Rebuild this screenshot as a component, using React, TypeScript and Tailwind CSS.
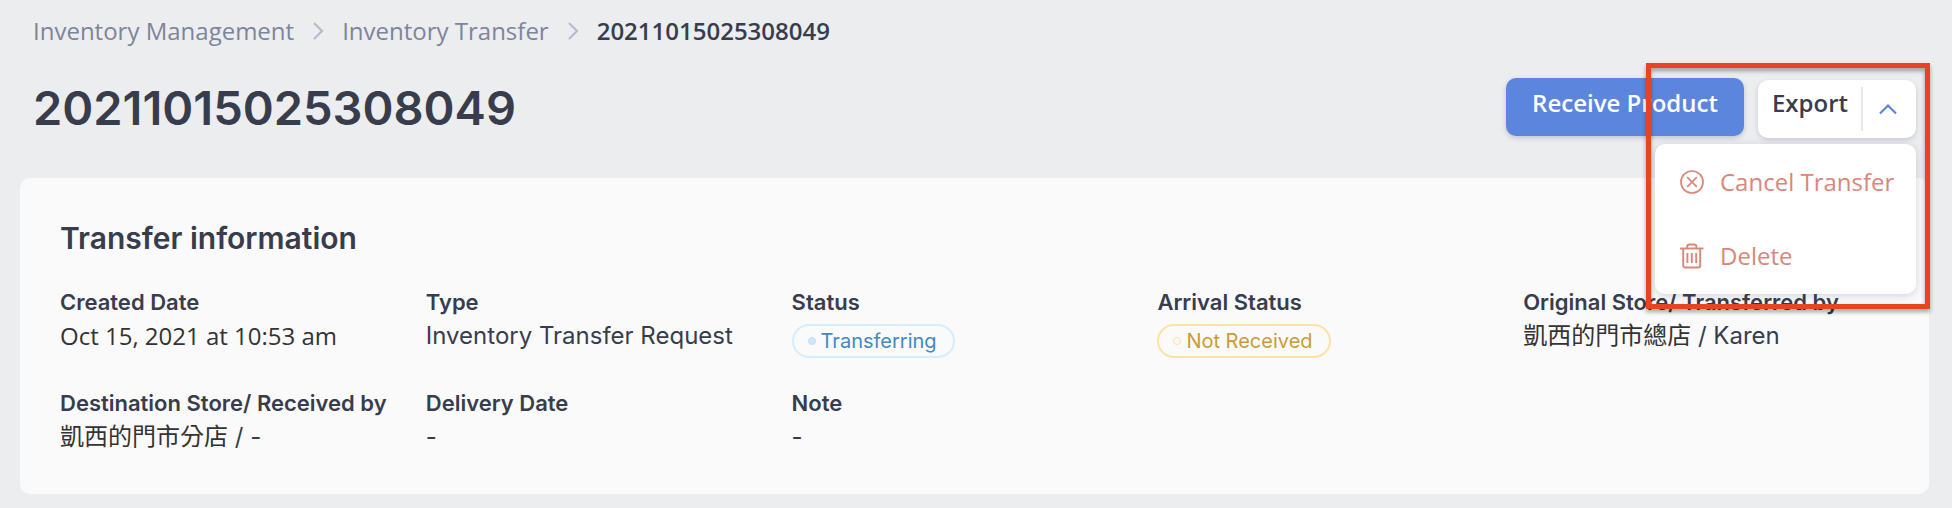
import { useState } from 'react'

type Tone = 'blue' | 'yellow'

const toneClass: Record<Tone, { badge: string; dot: string }> = {
  blue: {
    badge: 'border-[#d6ecff] text-[#4289c2]',
    dot: 'border-[#bfe0f8] bg-[#cfe6f8]',
  },
  yellow: {
    badge: 'border-[#ffe2a0] text-[#cc9a35]',
    dot: 'border-[#ffe2a0]',
  },
}

export default function App() {
  const [open, setOpen] = useState(true)

  return (
    <div className="min-h-screen bg-[#ecedef] pt-3 pb-3.5 pl-5 pr-[23px] text-[#383d4e] font-['Open_Sans','Noto_Sans_CJK_TC',sans-serif] text-2xl">
      {/* breadcrumb */}
      <nav aria-label="Breadcrumb" className="flex items-center gap-[18px] pl-[13px] leading-[38px] text-[#7d859b]">
        <a href="#inventory">Inventory Management</a>
        <Separator />
        <a href="#transfer">Inventory Transfer</a>
        <Separator />
        <span className="font-semibold text-[#383d4e]">20211015025308049</span>
      </nav>

      {/* title and actions */}
      <header className="mt-7 mb-10 flex items-start justify-between px-[13px]">
        <h1 className="font-['Inter',sans-serif] text-[47px] leading-[60px] font-semibold">20211015025308049</h1>
        <div className="flex items-start gap-3.5">
          <button className="h-[58px] rounded-[10px] bg-[#5c86de] px-[26px] pb-2 font-semibold text-white shadow-[0_2px_5px_rgba(60,70,110,0.25)]">
            Receive Product
          </button>
          <div className="relative mt-0.5">
            <div className="flex h-[58px] items-center rounded-[10px] bg-white shadow-[0_2px_5px_rgba(60,70,110,0.2)]">
              <button className="h-full pb-3 pl-3.5 pr-[13px] font-semibold">Export</button>
              <button
                aria-label="More actions"
                aria-expanded={open}
                onClick={() => setOpen(!open)}
                className="flex h-11 w-[55px] items-center justify-center border-l-2 border-[#e4e9ee] pr-1"
              >
                <svg width="18" height="12" viewBox="0 0 18 12" fill="none" stroke="#5c86de" strokeWidth="2.2">
                  <path d="M1 10.5 9 2.5l8 8" />
                </svg>
              </button>
            </div>
            {open && <ActionMenu />}
            <div className="pointer-events-none absolute -top-[17px] -right-3.5 z-20 h-[246px] w-[284px] border-5 border-[#e94326] drop-shadow-[0_3px_2px_rgba(0,0,0,0.35)]" />
          </div>
        </div>
      </header>

      {/* transfer information */}
      <section className="rounded-[10px] bg-[#fafafa] p-10 font-['Inter','Noto_Sans_CJK_TC',sans-serif]">
        <h2 className="mb-[27px] text-3xl leading-10 font-semibold">Transfer information</h2>
        <dl className="grid grid-cols-5 gap-y-7">
          <Field label="Created Date">
            <span className="font-['Open_Sans',sans-serif] text-[#333]">Oct 15, 2021 at 10:53 am</span>
          </Field>
          <Field label="Type">Inventory Transfer Request</Field>
          <Field label="Status">
            <Badge tone="blue">Transferring</Badge>
          </Field>
          <Field label="Arrival Status">
            <Badge tone="yellow">Not Received</Badge>
          </Field>
          <Field label="Original Store/ Transferred by">
            <span className="text-[#333]">凱西的門市總店</span> / Karen
          </Field>
          <Field label="Destination Store/ Received by">
            <span className="text-[#333]">凱西的門市分店</span> / -
          </Field>
          <Field label="Delivery Date">-</Field>
          <Field label="Note">-</Field>
        </dl>
      </section>
    </div>
  )
}

function Separator() {
  return (
    <svg width="12" height="18" viewBox="0 0 12 18" fill="none" stroke="#b4bccd" strokeWidth="2.2" aria-hidden="true">
      <path d="M2 1l8 8-8 8" />
    </svg>
  )
}

function ActionMenu() {
  return (
    <div className="absolute top-full right-0 z-10 mt-1.5 w-[261px] rounded-[10px] bg-white py-px text-[#d98778] shadow-[0_2px_8px_rgba(60,70,110,0.2)]">
      <button className="flex h-[74px] w-full items-center gap-4 pl-[25px] whitespace-nowrap">
        <svg width="24" height="24" viewBox="0 0 24 24" fill="none" stroke="currentColor" strokeWidth="1.7">
          <circle cx="12" cy="12" r="11" />
          <path d="M7.2 7.2l9.6 9.6M16.8 7.2l-9.6 9.6" />
        </svg>
        Cancel Transfer
      </button>
      <button className="flex h-[74px] w-full items-center gap-4 pl-[25px] whitespace-nowrap">
        <svg width="24" height="26" viewBox="0 0 24 26" fill="none" stroke="currentColor" strokeWidth="1.9">
          <path d="M0 5.5h23.500" />
          <path d="M3.200 5.500v17a2 2 0 0 0 2 2h13a2 2 0 0 0 2-2v-17" />
          <path d="M7.200 5.500V3.800a2.300 2.300 0 0 1 2.300-2.300h4.600a2.300 2.300 0 0 1 2.300 2.300v1.700" />
          <path d="M7.400 10v10M11.800 10v10M16.200 10v10" />
        </svg>
        Delete
      </button>
    </div>
  )
}

function Field({ label, children }: { label: string; children: React.ReactNode }) {
  return (
    <div>
      <dt className="text-[22px] leading-[34px] font-semibold whitespace-nowrap">{label}</dt>
      <dd className="leading-[34px]">{children}</dd>
    </div>
  )
}

function Badge({ tone, children }: { tone: Tone; children: React.ReactNode }) {
  return (
    <span className={`mt-[5px] flex h-[34px] w-fit items-center gap-[5px] rounded-full border-2 pl-3.5 pr-4 text-xl ${toneClass[tone].badge}`}>
      <span className={`size-2 rounded-full border ${toneClass[tone].dot}`} />
      {children}
    </span>
  )
}
